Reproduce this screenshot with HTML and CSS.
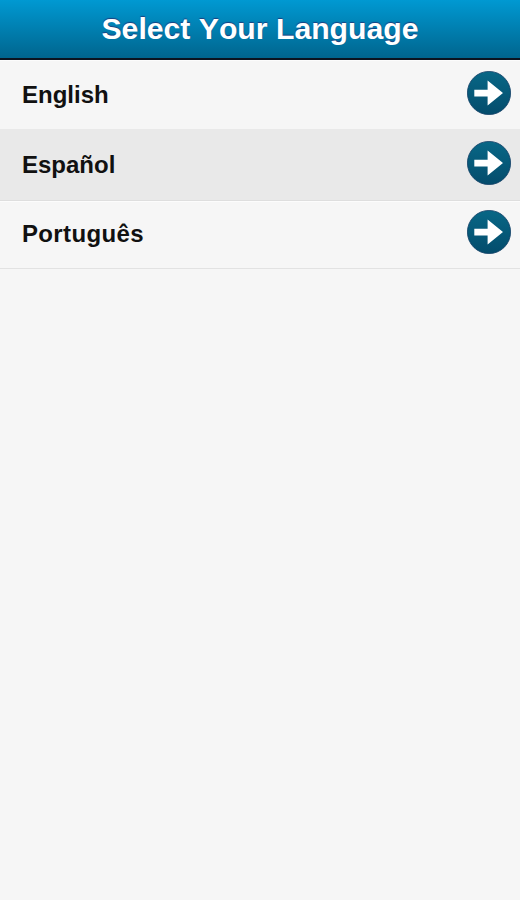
FILE: index.html
```html
<!DOCTYPE html>
<html lang="en">
<head>
    <meta charset="UTF-8">
    <meta name="viewport" content="width=device-width, initial-scale=1.0">
    <title>Select Your Language</title>
    <link rel="stylesheet" href="styles.css">
</head>
<body>
    <header class="header">
        <h1>Select Your Language</h1>
    </header>
    <svg class="defs" width="0" height="0">
        <defs>
            <linearGradient id="circleFill" x1="0" y1="0" x2="0" y2="1">
                <stop offset="0" stop-color="#086786"/>
                <stop offset="1" stop-color="#044c6c"/>
            </linearGradient>
            <symbol id="arrow" viewBox="0 0 44 44">
                <circle cx="22" cy="22" r="21.6" fill="url(#circleFill)" stroke="#123f66" stroke-width="0.8"/>
                <path d="M7.3 18.8H20.6V9.4L36 22L20.6 34.6V25.5H7.3Z" fill="#fff"/>
            </symbol>
        </defs>
    </svg>
    <ul class="languages">
        <li class="row">
            <span>English</span>
            <svg class="arrow"><use href="#arrow"/></svg>
        </li>
        <li class="row selected">
            <span>Español</span>
            <svg class="arrow"><use href="#arrow"/></svg>
        </li>
        <li class="row">
            <span class="wide">Português</span>
            <svg class="arrow"><use href="#arrow"/></svg>
        </li>
    </ul>
</body>
</html>
```
FILE: styles.css
```css
* {
    box-sizing: border-box;
}
body {
    margin: 0;
    min-height: 100vh;
    background-color: #f6f6f6;
    font-family: "Liberation Sans", Arial, sans-serif;
    font-kerning: none;
}
.header {
    height: 60px;
    border-bottom: 2px solid #0b1420;
    background: linear-gradient(#0099d2, #00658e);
}
h1 {
    margin: 0;
    font-size: 30.2px;
    font-weight: bold;
    line-height: 57px;
    text-align: center;
    color: #ffffff;
    text-shadow: 0 -1px 1px #1b3f80;
}
.defs {
    display: block;
}
.languages {
    margin: 0;
    padding: 0;
    list-style: none;
}
.row {
    display: flex;
    align-items: center;
    justify-content: space-between;
    height: 69px;
    padding: 0 9px 4px 22px;
    border-top: 1px solid #fcfcfc;
    font-size: 24px;
    font-weight: bold;
    color: #111111;
}
.row span {
    padding-top: 3px;
}
.row .wide {
    letter-spacing: 0.35px;
}
.row.selected {
    height: 72px;
    border-top-color: #e9e9e9;
    border-bottom: 1px solid #dedede;
    background-color: #e9e9e9;
}
.row:last-child {
    height: 68px;
    padding-bottom: 6px;
    border-bottom: 1px solid #e2e2e2;
}
.arrow {
    width: 44px;
    height: 44px;
}
```
